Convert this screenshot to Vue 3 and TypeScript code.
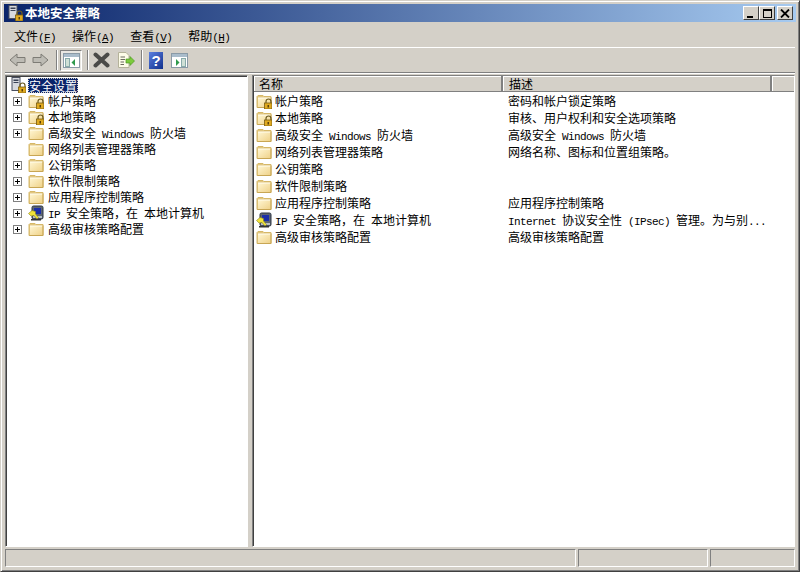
<template>
  <div class="window">
    <svg class="defs" width="0" height="0" aria-hidden="true">
      <defs>
        <linearGradient id="fold" x1="0" y1="0" x2="1" y2="1">
          <stop offset="0" stop-color="#fff6d2" />
          <stop offset="1" stop-color="#efd28a" />
        </linearGradient>
        <symbol id="folder" viewBox="0 0 16 16">
          <path d="M1 3.5 L2 2.5 H7 L8 3.5 H15 V14.5 H1 Z" fill="#e2c67e" stroke="#d6b868" />
          <rect x="2" y="5" width="12.5" height="9" fill="url(#fold)" />
          <path d="M2 5 H14.5" stroke="#fffdf0" />
          <path d="M15 4.5 V14.5 H1.5" stroke="#c8a654" fill="none" />
        </symbol>
        <symbol id="lock" viewBox="0 0 16 16">
          <path d="M10 10 V8.5 a2.5 2.5 0 0 1 5 0 V10" fill="none" stroke="#6b5a20" stroke-width="1.2" />
          <rect x="8.5" y="10" width="7.5" height="6" fill="#e0aa20" stroke="#7a5c10" stroke-width=".8" />
          <rect x="11.5" y="12" width="1.5" height="2.5" fill="#5a4008" />
        </symbol>
        <symbol id="computer" viewBox="0 0 16 16">
          <rect x="4" y="1" width="11" height="13" rx="1.5" fill="#5d6672" stroke="#2f3540" />
          <rect x="6" y="3" width="7" height="6" fill="#1c2fa8" />
          <rect x="5" y="11" width="9" height="2" fill="#b9bec6" />
          <path d="M0.5 8.5 L3 11 L6 10.5 L9 14 L10.5 12.5 L7.5 9 L7.5 6.5 L4 5.5 Z" fill="#f2e33a" stroke="#8a8420" stroke-width=".6" />
          <rect x="3" y="14" width="10" height="1.5" fill="#333" />
        </symbol>
        <symbol id="root" viewBox="0 0 16 16">
          <rect x="2" y="0.5" width="8" height="13" fill="#d7d9de" stroke="#4b5060" />
          <rect x="3.5" y="2.5" width="5" height="1.5" fill="#3a4256" />
          <rect x="3.5" y="5" width="5" height="1" fill="#3a4256" />
          <use href="#lock" width="16" height="16" />
        </symbol>
      </defs>
    </svg>

    <header class="titlebar">
      <svg class="t-icon" width="16" height="16"><use href="#root" /></svg>
      <span class="t-text">本地安全策略</span>
      <div class="t-btns">
        <button class="cap"><i class="c-min"></i></button>
        <button class="cap"><i class="c-max"></i></button>
        <button class="cap close">
          <svg width="10" height="9" viewBox="0 0 10 9"><path d="M1 0.5 L9 8.5 M9 0.5 L1 8.5" stroke="#000" stroke-width="1.8" /></svg>
        </button>
      </div>
    </header>

    <nav class="menubar">
      <span v-for="m in menus" :key="m.label" class="menu">
        {{ m.label }}<span class="lat">(<u>{{ m.key }}</u>)</span>
      </span>
    </nav>

    <div class="toolbar">
      <svg class="tool" width="17" height="16" viewBox="0 0 17 16">
        <path d="M1 8 L8 2 V5.5 H16 V10.5 H8 V14 Z" fill="#bdbbb4" stroke="#7d7b75" />
      </svg>
      <svg class="tool" width="17" height="16" viewBox="0 0 17 16">
        <path d="M16 8 L9 2 V5.5 H1 V10.5 H9 V14 Z" fill="#bdbbb4" stroke="#7d7b75" />
      </svg>
      <i class="tsep"></i>
      <div class="pressed">
        <svg width="17" height="15" viewBox="0 0 17 15">
          <rect x=".5" y=".5" width="16" height="14" fill="#fff" stroke="#8a9aa6" />
          <rect x="1" y="1" width="15" height="3" fill="#a9bccb" />
          <rect x="2.5" y="5.5" width="4" height="8" fill="#cfe0d6" stroke="#8aa" />
          <path d="M12 6 L8.5 9.5 L12 13 Z" fill="#2f9a4c" />
        </svg>
      </div>
      <i class="tsep"></i>
      <svg class="tool del" width="17" height="16" viewBox="0 0 17 16">
        <path d="M2.5 2.5 L14.5 13.5 M14.5 2.5 L2.5 13.5" stroke="#4a4a48" stroke-width="4" stroke-linecap="round" />
      </svg>
      <svg class="tool export" width="18" height="16" viewBox="0 0 18 16">
        <path d="M1.5 .5 H9 L12 3.5 V15.5 H1.5 Z" fill="#fdfce8" stroke="#b4b29a" />
        <path d="M3.5 5 H8 M3.5 7.5 H8 M3.5 10 H7 M3.5 12.5 H7" stroke="#6b6b60" />
        <path d="M9 7 H13 V4.5 L17.5 9 L13 13.5 V11 H9 Z" fill="#7ccb3c" stroke="#4d9a22" stroke-width=".7" />
      </svg>
      <i class="tsep"></i>
      <div class="help">?</div>
      <svg class="tool panel" width="17" height="15" viewBox="0 0 17 15">
        <rect x=".5" y=".5" width="16" height="14" fill="#fff" stroke="#8a9aa6" />
        <rect x="1" y="1" width="15" height="3" fill="#a9bccb" />
        <rect x="10.5" y="5.5" width="4" height="8" fill="#cfe0d6" stroke="#8aa" />
        <path d="M5 6 L8.5 9.5 L5 13 Z" fill="#2f9a4c" />
      </svg>
    </div>

    <main class="panes">
      <section class="tree pane">
        <div class="tree-row">
          <span class="exp blank root-gap"></span>
          <svg class="ic" width="16" height="16"><use href="#root" /></svg>
          <span class="selected">安全设置</span>
        </div>
        <div v-for="n in nodes" :key="n.name" class="tree-row child">
          <span class="exp" :class="{ blank: !n.expand }"></span>
          <svg class="ic" width="16" height="16">
            <use :href="n.icon === 'computer' ? '#computer' : '#folder'" />
            <use v-if="n.icon === 'locked'" href="#lock" />
          </svg>
          <span class="label"><span v-for="(r, i) in runs(n.name)" :key="i" :class="{ lat: r.lat }">{{ r.text }}</span></span>
        </div>
      </section>

      <section class="list pane">
        <div class="head">
          <div class="h-cell h-name">名称</div>
          <div class="h-cell h-desc">描述</div>
          <div class="h-rest"></div>
        </div>
        <div v-for="n in nodes" :key="n.name" class="list-row">
          <svg class="ic" width="16" height="16">
            <use :href="n.icon === 'computer' ? '#computer' : '#folder'" />
            <use v-if="n.icon === 'locked'" href="#lock" />
          </svg>
          <span class="l-name"><span v-for="(r, i) in runs(n.name)" :key="i" :class="{ lat: r.lat }">{{ r.text }}</span></span>
          <span class="l-desc"><span v-for="(r, i) in runs(n.desc)" :key="i" :class="{ lat: r.lat }">{{ r.text }}</span></span>
        </div>
      </section>
    </main>

    <footer class="status">
      <div class="cell c1"></div>
      <div class="cell c2"></div>
      <div class="cell c3"></div>
    </footer>
  </div>
</template>

<script setup lang="ts">
interface Node {
  name: string;
  desc: string;
  icon: "folder" | "locked" | "computer";
  expand: boolean;
}

const menus = [
  { label: "文件", key: "F" },
  { label: "操作", key: "A" },
  { label: "查看", key: "V" },
  { label: "帮助", key: "H" },
];

const nodes: Node[] = [
  { name: "帐户策略", desc: "密码和帐户锁定策略", icon: "locked", expand: true },
  { name: "本地策略", desc: "审核、用户权利和安全选项策略", icon: "locked", expand: true },
  { name: "高级安全 Windows 防火墙", desc: "高级安全 Windows 防火墙", icon: "folder", expand: true },
  { name: "网络列表管理器策略", desc: "网络名称、图标和位置组策略。", icon: "folder", expand: false },
  { name: "公钥策略", desc: "", icon: "folder", expand: true },
  { name: "软件限制策略", desc: "", icon: "folder", expand: true },
  { name: "应用程序控制策略", desc: "应用程序控制策略", icon: "folder", expand: true },
  { name: "IP 安全策略，在 本地计算机", desc: "Internet 协议安全性 (IPsec) 管理。为与别...", icon: "computer", expand: true },
  { name: "高级审核策略配置", desc: "高级审核策略配置", icon: "folder", expand: true },
];

// latin runs are squeezed so they keep the half-width look of the original font
function runs(text: string) {
  return (text.match(/[\x20-\x7e]+|[^\x20-\x7e]+/g) || []).map((t) => ({
    text: t,
    lat: /^[\x20-\x7e]/.test(t),
  }));
}
</script>

<style>
html,
body {
  margin: 0;
  overflow: hidden;
}
</style>

<style scoped>
.window {
  width: 800px;
  height: 572px;
  box-sizing: border-box;
  padding: 4px;
  display: flex;
  flex-direction: column;
  background: #d4d0c8;
  border: 1px solid #404040;
  border-top-color: #d4d0c8;
  border-left-color: #d4d0c8;
  box-shadow: inset 1px 1px 0 #fff, inset -1px -1px 0 #808080;
  font: 12px/16px "Noto Sans CJK SC", sans-serif;
  color: #000;
}
.defs {
  position: absolute;
}
.lat {
  font-family: "Liberation Mono", monospace;
  font-size: 11px;
  letter-spacing: -0.6px;
  line-height: 1;
  white-space: pre;
}
.titlebar {
  height: 18px;
  margin: -1px -1px 0 -1px;
  flex: none;
  display: flex;
  align-items: center;
  padding: 0 3px 0 3px;
  background: linear-gradient(90deg, #0a246a, #a6caf0);
}
.t-icon {
  flex: none;
}
.t-text {
  margin-left: 2px;
  color: #fff;
  font-size: 12.5px;
  font-weight: 700;
}
.t-btns {
  margin-left: auto;
  display: flex;
}
.cap {
  width: 16px;
  height: 14px;
  padding: 0;
  box-sizing: border-box;
  border: 1px solid;
  border-color: #fff #404040 #404040 #fff;
  background: #d4d0c8;
  display: flex;
  align-items: center;
  justify-content: center;
  position: relative;
}
.cap.close {
  margin-left: 2px;
}
.c-min {
  width: 6px;
  height: 2px;
  background: #000;
  margin-top: 7px;
  margin-right: 2px;
}
.c-max {
  width: 9px;
  height: 9px;
  box-sizing: border-box;
  border: 1px solid #000;
  border-top-width: 2px;
}
.menubar {
  height: 26px;
  flex: none;
  display: flex;
  align-items: center;
  padding: 2px 0 0 9px;
  box-sizing: border-box;
  gap: 16px;
  border-bottom: 1px solid #fff;
}
.menu {
  white-space: pre;
}
.toolbar {
  height: 25px;
  flex: none;
  display: flex;
  align-items: center;
  padding-left: 4px;
  box-sizing: border-box;
  border-bottom: 1px solid #808080;
  box-shadow: 0 1px 0 #fff;
}
.tool {
  flex: none;
  margin-right: 6px;
}
.tool.del {
  margin-left: 2px;
  margin-right: 7px;
}
.tool.export {
  margin-right: 5px;
}
.tsep {
  flex: none;
  width: 1px;
  height: 20px;
  background: #808080;
  border-right: 1px solid #fff;
  margin: 0 2px 0 1px;
}
.pressed {
  flex: none;
  width: 22px;
  height: 21px;
  box-sizing: border-box;
  border: 1px solid;
  border-color: #808080 #fff #fff #808080;
  background: #e9e7e2;
  display: flex;
  align-items: center;
  justify-content: center;
  margin-right: 4px;
}
.help {
  flex: none;
  width: 14px;
  height: 17px;
  margin: 0 8px 0 4px;
  background: linear-gradient(135deg, #5b7fe0, #10308c);
  color: #fff;
  font: 700 15px/17px "Liberation Sans", sans-serif;
  text-align: center;
}
.panes {
  flex: 1;
  min-height: 0;
  display: flex;
  gap: 4px;
  padding-top: 2px;
}
.pane {
  background: #fff;
  border: 1px solid;
  border-color: #808080 #fff #fff #808080;
  box-shadow: inset 1px 1px 0 #404040;
  overflow: hidden;
  box-sizing: border-box;
}
.tree {
  width: 243px;
  flex: none;
  padding: 1px 0 0 1px;
}
.tree-row {
  height: 16px;
  display: flex;
  align-items: center;
  white-space: pre;
}
.exp {
  width: 9px;
  height: 9px;
  box-sizing: border-box;
  flex: none;
  border: 1px solid #808080;
  margin: 0 6px 0 6px;
  background:
    linear-gradient(#000, #000) center / 5px 1px no-repeat,
    linear-gradient(#000, #000) center / 1px 5px no-repeat,
    #fff;
}
.exp.blank {
  border: 0;
  background: none;
}
.root-gap {
  width: 0;
  margin: 0 3px 0 0;
}
.tree-row .ic {
  flex: none;
}
.child .ic {
  margin-right: 4px;
}
.selected {
  margin-left: 2px;
  background: #0a246a;
  color: #fff;
  outline: 1px dotted #d4d0c8;
  outline-offset: -1px;
  padding: 0 1px;
  height: 15px;
  line-height: 15px;
}
.list {
  flex: 1;
  min-width: 0;
  padding: 0 0 0 1px;
}
.head {
  height: 16px;
  display: flex;
  background: #d4d0c8;
  border-bottom: 1px solid #808080;
  box-sizing: border-box;
}
.h-cell {
  box-sizing: border-box;
  padding-left: 5px;
  line-height: 16px;
  border-right: 2px solid #808080;
  box-shadow: inset 1px 1px 0 #fff;
}
.h-name {
  width: 249px;
}
.h-desc {
  width: 269px;
  padding-left: 6px;
}
.h-rest {
  flex: 1;
  box-shadow: inset 1px 1px 0 #fff;
}
.list-row {
  height: 17px;
  display: flex;
  align-items: center;
  padding-left: 2px;
  white-space: pre;
}
.list-row .ic {
  flex: none;
}
.l-name {
  width: 233px;
  padding-left: 3px;
  flex: none;
}
.l-desc {
  overflow: hidden;
}
.status {
  height: 20px;
  flex: none;
  display: flex;
  gap: 2px;
  padding-top: 2px;
  box-sizing: border-box;
}
.cell {
  box-sizing: border-box;
  height: 18px;
  border: 1px solid;
  border-color: #808080 #fff #fff #808080;
}
.c1 {
  width: 571px;
}
.c2 {
  width: 130px;
}
.c3 {
  flex: 1;
}
</style>
